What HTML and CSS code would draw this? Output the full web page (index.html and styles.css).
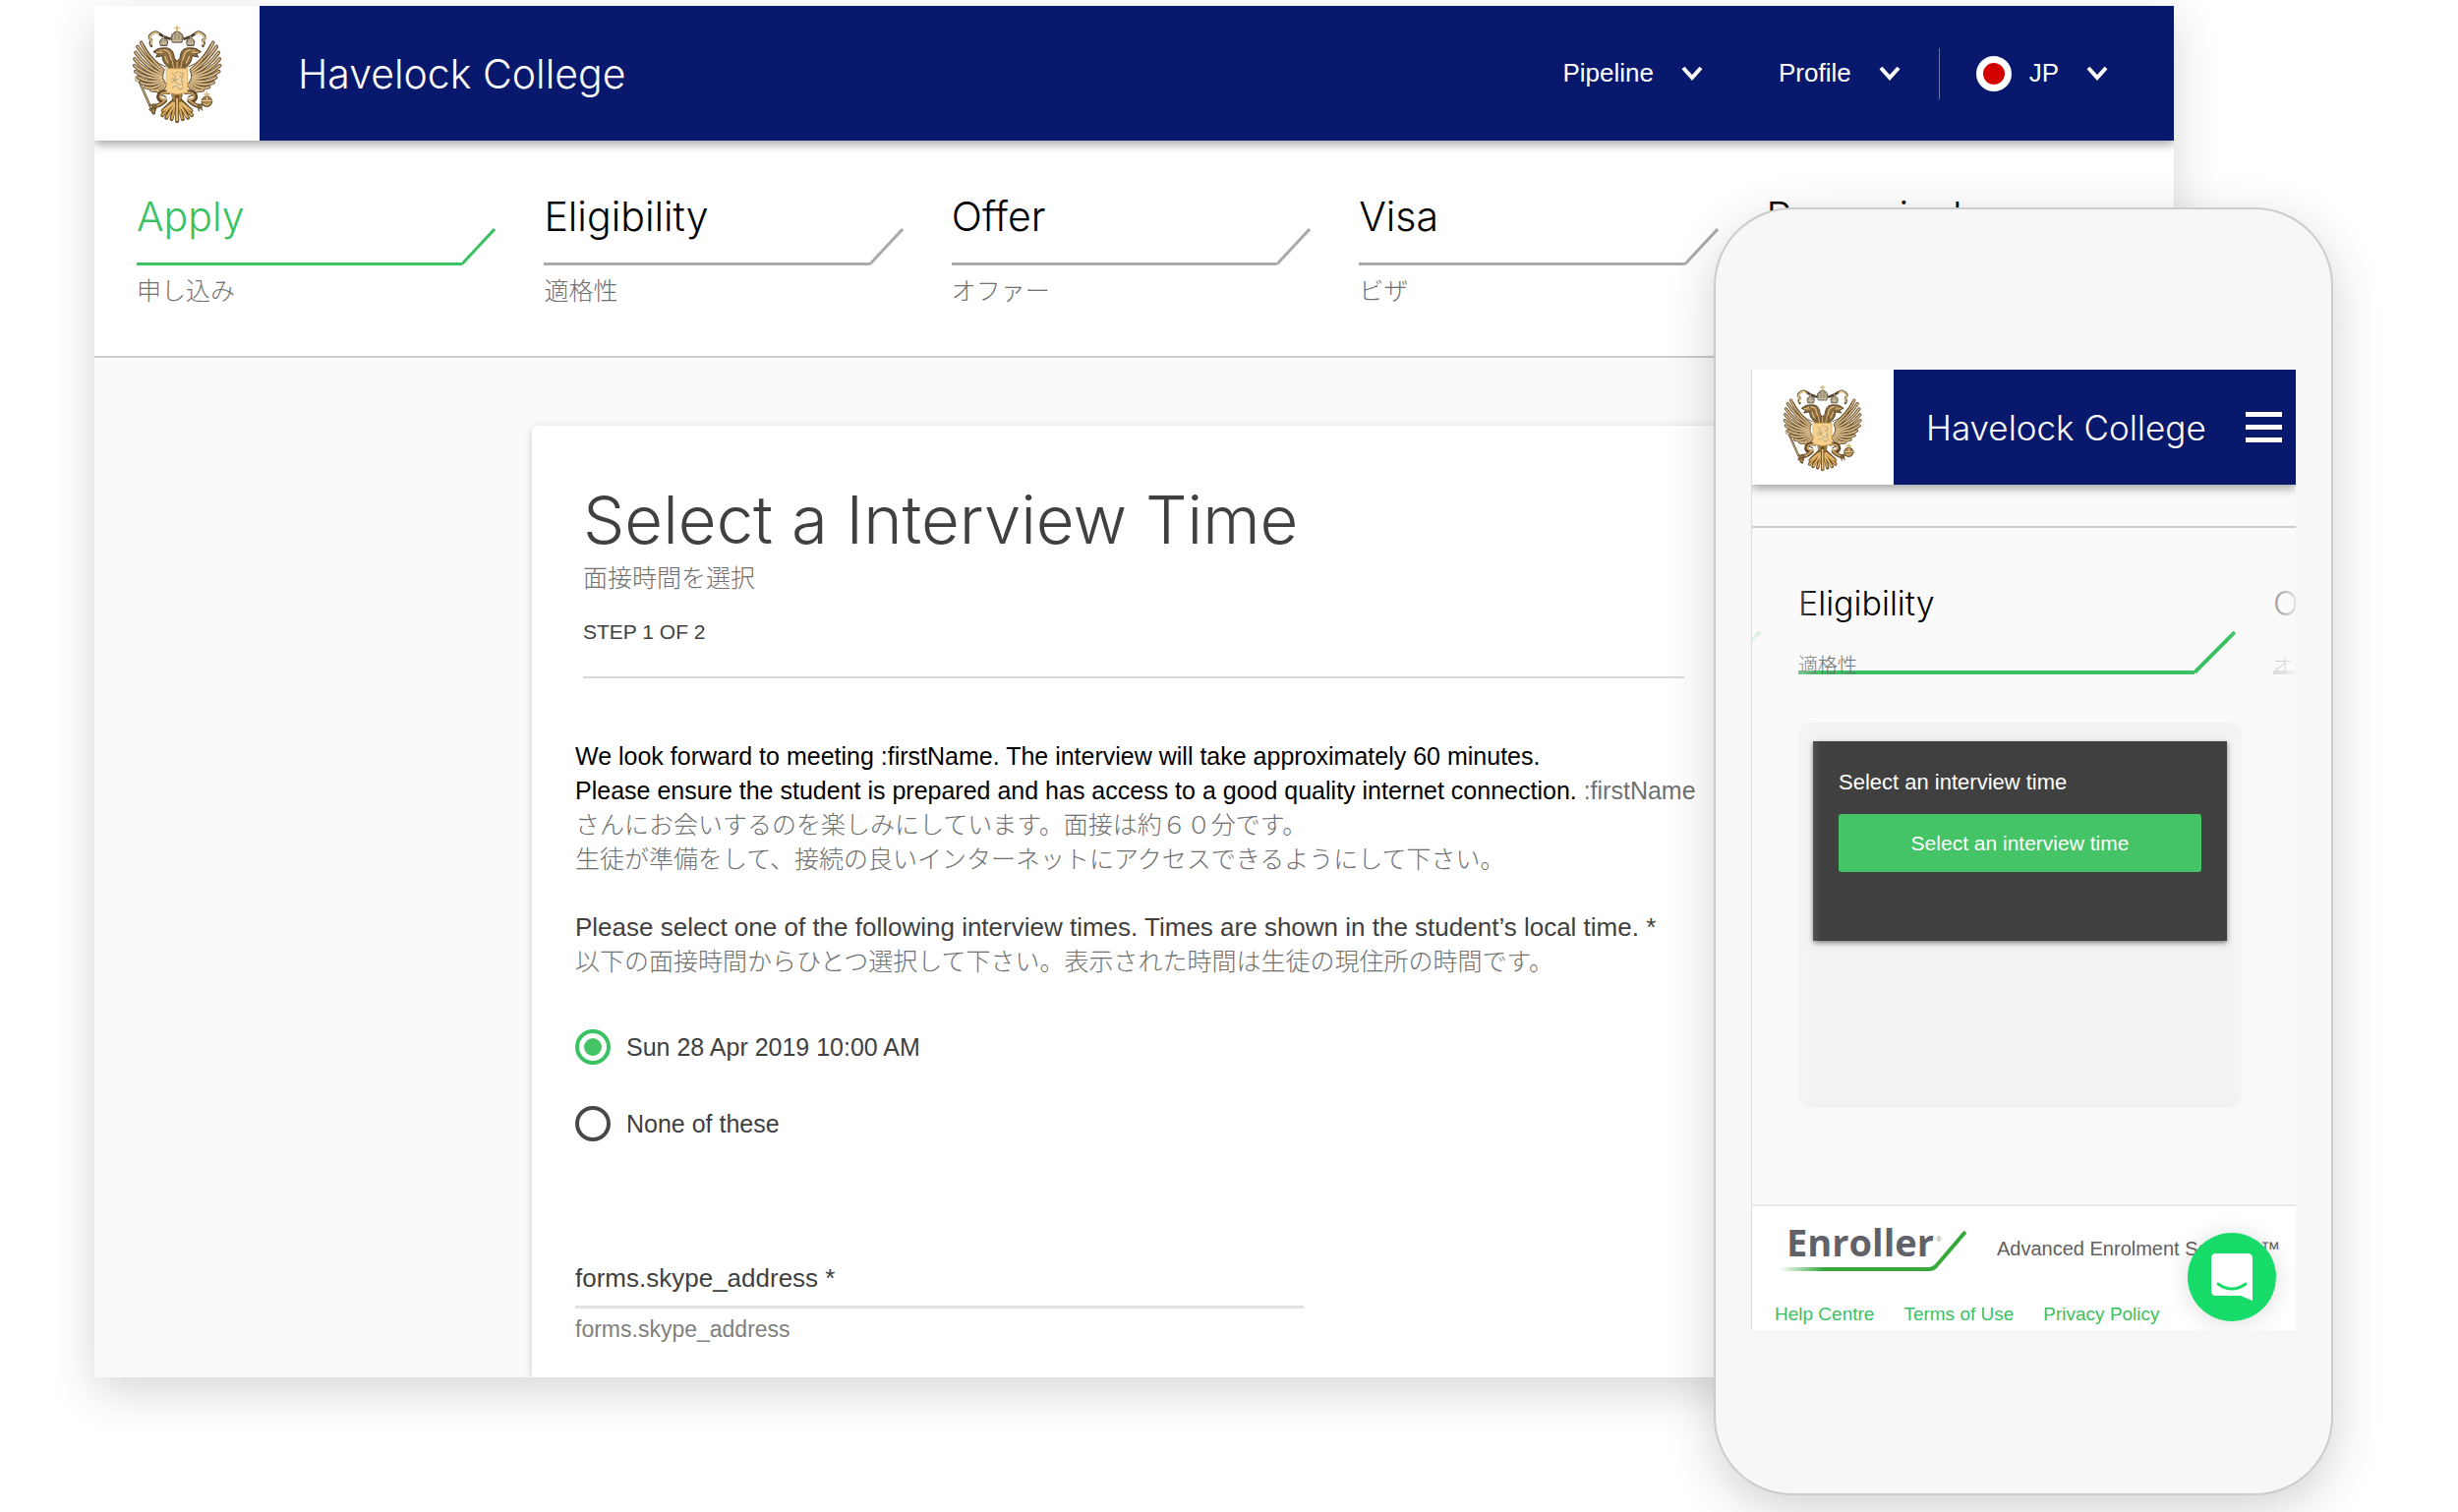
FILE: index.html
```html
<!DOCTYPE html>
<html lang="en">
<head>
    <meta charset="UTF-8">
    <meta name="viewport" content="width=device-width, initial-scale=1.0">
    <title>Havelock College</title>
    <link rel="stylesheet" href="styles.css">
</head>
<body>
    <!-- Shared crest -->
    <svg class="defs" width="0" height="0" aria-hidden="true">
        <defs>
            <linearGradient id="swoosh" x1="0" y1="0" x2="1" y2="0">
                <stop offset="0" stop-color="#36a83c" stop-opacity="0"/>
                <stop offset="0.3" stop-color="#36a83c"/>
            </linearGradient>
            <g id="feathers">
                <path d="M120 168Q76 130 53 84M118 174Q70 140 42 96M116 180Q64 156 36 114M116 186Q62 172 33 134M116 190Q64 184 32 154M116 194Q66 196 35 172M118 198Q74 210 44 190M120 202Q80 220 52 206M122 206Q90 230 66 220M124 210Q104 236 84 229M128 212Q114 238 102 232"/>
            </g>
            <g id="half">
                <use href="#feathers" stroke="#5f4a2e" stroke-width="11"/>
                <use href="#feathers" stroke="#ac8b5c" stroke-width="7"/>
                <use href="#feathers" stroke="#ecd4a4" stroke-width="3"/>
                <path d="M60 90Q84 142 128 158" stroke="#6b5028" stroke-width="3"/>
                <!-- ribbon -->
                <path d="M141 72Q120 66 108 56Q96 46 84 58Q72 66 84 76Q78 86 84 94" stroke="#4f4230" stroke-width="8"/>
                <path d="M106 57Q94 48 84 60Q74 68 84 78L83 90" stroke="#e6c684" stroke-width="5"/>
                <!-- neck and head -->
                <path d="M161 160L134 158Q116 140 118 124L98 128L104 118L90 112Q104 98 122 100Q146 98 152 118Q152 134 162 140Z" fill="#8b6d40" stroke="#4c3a20" stroke-width="3"/>
                <path d="M112 108Q130 102 140 116Q142 134 152 148M126 126Q130 142 144 154M118 114L100 113" stroke="#e2bd7c" stroke-width="4"/>
                <circle cx="118" cy="107" r="2" fill="#2f2412"/>
                <!-- small crown -->
                <path d="M112 92Q104 74 122 70Q140 74 132 92Z" fill="#9d9078" stroke="#5a4c36" stroke-width="3"/>
                <path d="M122 62V90M112 86H132M117 75V88M127 75V88" stroke="#ded2b4" stroke-width="2"/>
                <!-- leg and claw -->
                <path d="M136 236Q108 230 106 252Q112 266 126 262Q112 276 92 280" stroke="#5f4727" stroke-width="13"/>
                <path d="M134 238Q112 234 110 250Q116 262 130 256Q114 274 92 280" stroke="#c9a365" stroke-width="6"/>
                <path d="M116 244L128 250M98 274L86 290M100 278L96 292M94 272L80 276" stroke="#715530" stroke-width="4"/>
                <!-- tail -->
                <path d="M158 256L120 292M158 256L118 306M160 258L130 314M160 258L146 318" stroke="#6a4b20" stroke-width="12"/>
                <path d="M158 260L120 292M158 262L118 306M160 264L131 313M160 266L147 316" stroke="#d9a95c" stroke-width="6"/>
                <path d="M156 264L124 290M158 270L134 310" stroke="#f6dca8" stroke-width="2"/>
            </g>
            <symbol id="crest" viewBox="24 26 280 306">
                <g fill="none" stroke-linecap="round" stroke-linejoin="round">
                    <path d="M44 196L90 300" stroke="#5a4527" stroke-width="7"/>
                    <path d="M44 196L90 300" stroke="#d6ba86" stroke-width="3"/>
                    <circle cx="43" cy="194" r="9" fill="#ddd0b0" stroke="#9a8a66" stroke-width="2"/>
                    <path d="M78 288L96 282L94 302Z" fill="#b08a50" stroke="#5a4527" stroke-width="3"/>
                    <use href="#half"/>
                    <use href="#half" transform="matrix(-1 0 0 1 326 0)"/>
                    <path d="M138 138H188L192 168H134Z" fill="#7d6036"/>
                    <path d="M148 140L152 160M163 142V162M178 140L174 160" stroke="#e2bd7c" stroke-width="3"/>
                    <path d="M146 236H180L174 264H152Z" fill="#a17c44" stroke="#5f4727" stroke-width="2"/>
                    <path d="M163 250V324" stroke="#6a4b20" stroke-width="12"/>
                    <path d="M163 256V322" stroke="#e6bd74" stroke-width="6"/>
                    <!-- main crown -->
                    <path d="M148 82Q136 58 163 48Q190 58 178 82Z" fill="#a39678" stroke="#5a4c36" stroke-width="3"/>
                    <path d="M163 34V48M156 39H170" stroke="#d4b878" stroke-width="5"/>
                    <path d="M148 78H178M152 62Q152 70 154 78M163 52V78M174 62Q174 70 172 78" stroke="#ddd2b8" stroke-width="2"/>
                    <!-- shield -->
                    <path d="M131 163H195V236L163 242L131 236Z" fill="#f8d08a" stroke="#c89a50" stroke-width="2"/>
                    <path d="M148 178L158 188L152 200L164 196M170 174L182 180L178 192L170 186M146 206Q156 196 162 208T182 204M148 222Q160 210 166 222T182 220M158 178L164 172M176 196L180 214M150 192L144 198" stroke="#a39c7c" stroke-width="3"/>
                    <path d="M160 184L170 196L176 212M154 212L168 216" stroke="#e8e3cc" stroke-width="3"/>
                    <!-- orb -->
                    <path d="M254 236V250M247 242H261" stroke="#d9bb7c" stroke-width="5"/>
                    <circle cx="254" cy="264" r="16" fill="#a5814a" stroke="#5a4527" stroke-width="3"/>
                    <path d="M239 262H269M254 249V262M246 272Q254 278 262 270" stroke="#e8cf9c" stroke-width="3"/>
                </g>
            </symbol>
            <symbol id="chevron" viewBox="0 0 22 16">
                <path d="M2 2L11 12L20 2" fill="none" stroke="#fff" stroke-width="4"/>
            </symbol>
        </defs>
    </svg>

    <div class="stage">
        <div class="window">
            <header class="topbar">
                <a class="logo" href="#" aria-label="Home"><svg class="crest"><use href="#crest"/></svg></a>
                <span class="school">Havelock College</span>
                <nav class="menu">
                    <button type="button">Pipeline <svg class="chevron"><use href="#chevron"/></svg></button>
                    <button type="button">Profile <svg class="chevron"><use href="#chevron"/></svg></button>
                    <button type="button" class="language"><span class="flag"></span>JP <svg class="chevron"><use href="#chevron"/></svg></button>
                </nav>
            </header>

            <ol class="steps">
                <li class="step active">
                    <div class="step-head"><h2>Apply</h2><svg viewBox="0 0 34 38"><path d="M0 36.5L33 1"/></svg></div>
                    <p lang="ja">申し込み</p>
                </li>
                <li class="step">
                    <div class="step-head"><h2>Eligibility</h2><svg viewBox="0 0 34 38"><path d="M0 36.5L33 1"/></svg></div>
                    <p lang="ja">適格性</p>
                </li>
                <li class="step">
                    <div class="step-head"><h2>Offer</h2><svg viewBox="0 0 34 38"><path d="M0 36.5L33 1"/></svg></div>
                    <p lang="ja">オファー</p>
                </li>
                <li class="step">
                    <div class="step-head"><h2>Visa</h2><svg viewBox="0 0 34 38"><path d="M0 36.5L33 1"/></svg></div>
                    <p lang="ja">ビザ</p>
                </li>
                <li class="step">
                    <div class="step-head"><h2>Pre-arrival</h2></div>
                </li>
            </ol>

            <main class="card">
                <div class="card-head">
                    <h1>Select a Interview Time</h1>
                    <p lang="ja">面接時間を選択</p>
                    <p class="count">STEP 1 OF 2</p>
                </div>
                <form>
                    <p class="intro">We look forward to meeting :firstName. The interview will take approximately 60 minutes.<br>
                    Please ensure the student is prepared and has access to a good quality internet connection. <span lang="ja">:firstName<br>
                    さんにお会いするのを楽しみにしています。面接は約６０分です。<br>
                    生徒が準備をして、接続の良いインターネットにアクセスできるようにして下さい。</span></p>
                    <p class="question">Please select one of the following interview times. Times are shown in the student’s local time. *<br>
                    <span lang="ja">以下の面接時間からひとつ選択して下さい。表示された時間は生徒の現住所の時間です。</span></p>
                    <div class="options">
                        <label><input type="radio" name="time" checked> Sun 28 Apr 2019 10:00 AM</label>
                        <label><input type="radio" name="time"> None of these</label>
                    </div>
                    <div class="field">
                        <input type="text" id="skype" placeholder="forms.skype_address *">
                        <label for="skype">forms.skype_address</label>
                    </div>
                </form>
            </main>
        </div>

        <div class="phone">
            <div class="screen">
                <header class="topbar">
                    <a class="logo" href="#" aria-label="Home"><svg class="crest"><use href="#crest"/></svg></a>
                    <span class="school">Havelock College</span>
                    <button type="button" class="burger" aria-label="Menu"><span></span><span></span><span></span></button>
                </header>
                <div class="carousel">
                    <section class="slide">
                        <div class="step-head"><div class="step-title"></div><svg viewBox="0 0 42 44"><path d="M0 42L41 1"/></svg></div>
                    </section>
                    <section class="slide">
                        <div class="step-head"><div class="step-title"><h2>Eligibility</h2><p lang="ja">適格性</p></div><svg viewBox="0 0 42 44"><path d="M0 42L41 1"/></svg></div>
                        <div class="panel">
                            <div class="task">
                                <h3>Select an interview time</h3>
                                <button type="button">Select an interview time</button>
                            </div>
                        </div>
                    </section>
                    <section class="slide next">
                        <div class="step-head"><div class="step-title"><h2>Offer</h2><p lang="ja">オファー</p></div></div>
                    </section>
                </div>
                <footer class="footer">
                    <div class="brand">
                        <svg viewBox="0 0 192 50">
                            <text class="brand-name" x="7" y="33">Enroller</text>
                            <text class="brand-mark" x="159" y="18">®</text>
                            <path d="M0 44H150V48H0Z" fill="url(#swoosh)"/>
                            <path d="M148 46H152Q156 46 159 43L189 8" fill="none" stroke="#36a83c" stroke-width="4"/>
                        </svg>
                        <span>Advanced Enrolment Services™</span>
                    </div>
                    <div class="links">
                        <a href="#">Help Centre</a>
                        <a href="#">Terms of Use</a>
                        <a href="#">Privacy Policy</a>
                    </div>
                </footer>
                <button type="button" class="chat" aria-label="Open chat">
                    <svg viewBox="0 0 42 48"><path d="M5 0H37Q42 0 42 5V48L30 43H5Q0 43 0 38V5Q0 0 5 0Z" fill="#fff"/><path d="M7 31Q21 41 35 31" fill="none" stroke="#18dc6a" stroke-width="3" stroke-linecap="round"/></svg>
                </button>
            </div>
        </div>
    </div>
</body>
</html>
```
FILE: styles.css
```css
* {
    box-sizing: border-box;
}

body {
    margin: 0;
    background: #fff;
    color: #404040;
    font-family: "Liberation Sans", "Noto Sans CJK JP", Arial, sans-serif;
    font-size: 25px;
    line-height: 35px;
}

h1, h2, h3, p, ol {
    margin: 0;
    padding: 0;
    font-weight: 300;
}

h1, h2, .school {
    font-family: Inter, "Liberation Sans", sans-serif;
    font-weight: 300;
}

button {
    border: none;
    background: none;
    padding: 0;
    color: inherit;
    font: inherit;
    cursor: pointer;
}

[lang="ja"] {
    color: #707070;
    font-size: 25px;
    font-weight: 300;
}

.defs {
    position: absolute;
}

.stage {
    position: relative;
    min-height: 1538px;
    padding: 6px 289px 0 96px;
    overflow: hidden;
}

/* Desktop window */
.window {
    overflow: hidden;
    background: #fafafa;
    box-shadow: 0 14px 44px rgba(0, 0, 0, 0.16);
}

.topbar {
    position: relative;
    display: flex;
    align-items: center;
    height: 137px;
    background: #08196d;
    color: #fff;
    box-shadow: 0 3px 10px rgba(0, 0, 0, 0.4);
}

.logo {
    display: flex;
    align-items: center;
    justify-content: center;
    width: 168px;
    height: 100%;
    background: #fff;
}

.crest {
    width: 93px;
    height: 102px;
}

.school {
    margin-left: 39px;
    font-size: 41px;
    line-height: 48px;
}

.menu {
    display: flex;
    align-items: center;
    margin-left: auto;
    padding-right: 67px;
}

.menu button {
    display: flex;
    align-items: center;
    gap: 28px;
    margin-right: 77px;
    font-size: 26px;
}

.menu .chevron {
    width: 22px;
    height: 16px;
}

.menu button:nth-child(2) {
    margin-right: 39px;
}

.menu .language {
    height: 52px;
    margin-right: 0;
    padding-left: 37px;
    border-left: 1px solid #6b76a8;
}

.flag {
    width: 36px;
    height: 36px;
    margin-right: -10px;
    border: 7px solid #fff;
    border-radius: 50%;
    background: #d30000;
}

.steps {
    display: grid;
    grid-template-columns: repeat(5, 1fr);
    padding: 53px 0 50px 43px;
    border-bottom: 2px solid #ccc;
    background: #fff;
    list-style: none;
}

.step-head {
    display: flex;
    align-items: flex-end;
    color: #000;
}

.step-head svg {
    fill: none;
    stroke: #aaa;
    stroke-width: 3;
}

.step .step-head {
    margin-right: 49px;
}

.step h2 {
    flex: 1;
    padding-bottom: 23px;
    border-bottom: 3px solid #aaa;
    font-size: 41px;
    line-height: 48px;
}

.step:last-child h2 {
    border-color: transparent;
}

.step .step-head svg {
    width: 34px;
    height: 38px;
}

.step p {
    margin-top: 10px;
    line-height: 32px;
}

.active .step-head h2 {
    border-color: #3ac162;
    color: #3ac162;
}

.active .step-head svg {
    stroke: #3ac162;
}

/* Interview form */
.card {
    margin: 69px 445px 0;
    padding: 56px 53px 33px 44px;
    border-radius: 6px 6px 0 0;
    background: #fff;
    box-shadow: 0 2px 10px rgba(0, 0, 0, 0.18);
}

.card-head {
    margin-left: 8px;
    padding-bottom: 29px;
    border-bottom: 2px solid #d8d8d8;
}

.card-head h1 {
    font-size: 67px;
    line-height: 80px;
}

.card-head p {
    margin-top: 3px;
    line-height: 32px;
}

.card-head .count {
    margin-top: 23px;
    font-size: 21px;
}

.intro {
    margin-top: 62px;
    color: #000;
    white-space: nowrap;
}

.question {
    margin-top: 34px;
    font-size: 26px;
    white-space: nowrap;
}

.options {
    display: grid;
    gap: 42px;
    margin-top: 51px;
}

.options label {
    display: flex;
    align-items: center;
    gap: 16px;
    height: 36px;
}

.options input {
    appearance: none;
    width: 36px;
    height: 36px;
    margin: 0;
    border: 4px solid #484848;
    border-radius: 50%;
}

.options input:checked {
    padding: 5px;
    border-color: #3ac162;
    background: #44c466 content-box;
}

.field {
    display: grid;
    max-width: 741px;
    margin-top: 122px;
}

.field input {
    height: 48px;
    padding: 0 0 10px;
    border: none;
    border-bottom: 3px solid #e2e2e2;
    font: inherit;
    font-size: 26px;
}

.field input::placeholder {
    color: #404040;
}

.field label {
    margin-top: 5px;
    color: #808080;
    font-size: 23px;
    line-height: 32px;
}

/* Phone */
.phone {
    position: absolute;
    top: 211px;
    right: 127px;
    width: 630px;
    padding: 163px 36px 166px;
    border: 2px solid #ccc;
    border-radius: 80px;
    background: #f7f7f7;
    box-shadow: 0 14px 50px rgba(0, 0, 0, 0.18);
}

.screen {
    position: relative;
    overflow: hidden;
    border-left: 1px solid #ddd;
    background: #fafafa;
}

.phone .topbar {
    height: 117px;
}

.phone .logo {
    width: 144px;
}

.phone .crest {
    width: 82px;
    height: 90px;
}

.phone .school {
    margin-left: 33px;
    font-size: 35px;
    white-space: nowrap;
}

.burger {
    display: grid;
    gap: 8px;
    width: 37px;
    margin-left: auto;
    margin-right: 14px;
}

.burger span {
    height: 5px;
    background: #fff;
}

.carousel {
    position: relative;
    display: flex;
    justify-content: center;
    margin-top: 42px;
    padding: 57px 0 98px;
    border-top: 2px solid #ccc;
}

/* Fade the neighbouring slides out at both edges */
.carousel::before,
.carousel::after {
    content: "";
    position: absolute;
    top: 0;
    bottom: 0;
    left: 0;
    width: 70px;
    background: linear-gradient(to right, rgba(250, 250, 250, 0.9), rgba(250, 250, 250, 0));
}

.carousel::after {
    left: auto;
    right: 0;
    background: linear-gradient(to left, rgba(250, 250, 250, 0.9), rgba(250, 250, 250, 0));
}

.slide {
    flex: 0 0 483px;
    padding: 0 20px 0 12px;
}

.slide .step-head {
    height: 92px;
    margin-right: 6px;
}

.step-title {
    flex: 1;
    border-bottom: 4px solid #3ac162;
}

.slide .step-head svg {
    width: 42px;
    height: 44px;
    stroke: #3ac162;
    stroke-width: 4;
}

.next .step-title {
    border-color: #aaa;
}

.slide h2 {
    font-size: 34px;
    line-height: 40px;
}

.slide p {
    margin: 31px 0 -7px;
    font-size: 20px;
    line-height: 24px;
}

.panel {
    height: 392px;
    margin-top: 49px;
    padding: 19px 15px;
    border-radius: 12px;
    background: #f2f2f2;
}

.task {
    padding: 28px 26px 70px;
    background: #404040;
    color: #fff;
    box-shadow: 0 2px 5px rgba(0, 0, 0, 0.5);
}

.task h3 {
    font-size: 22px;
    line-height: 28px;
}

.task button {
    width: 100%;
    height: 59px;
    margin-top: 18px;
    border-radius: 3px;
    background: #44c466;
    font-size: 21px;
}

.footer {
    height: 128px;
    padding-top: 18px;
    border-top: 2px solid #e8e8e8;
    background: #fff;
}

.brand {
    display: flex;
    align-items: center;
    gap: 29px;
    margin-left: 28px;
    color: #606060;
    font-size: 20px;
    white-space: nowrap;
}

.brand svg {
    flex: none;
    width: 192px;
    height: 50px;
}

.brand-name {
    fill: #616269;
    font: bold 38px "Open Sans", sans-serif;
}

.brand-mark {
    fill: #999;
    font-size: 8px;
}

.links {
    display: flex;
    gap: 30px;
    margin: 30px 0 0 23px;
    font-size: 19px;
    line-height: 24px;
}

.links a {
    color: #3ac162;
    text-decoration: none;
}

.chat {
    position: absolute;
    right: 20px;
    bottom: 9px;
    display: grid;
    place-items: center;
    width: 90px;
    height: 90px;
    border-radius: 50%;
    background: #18dc6a;
    box-shadow: 0 2px 24px rgba(0, 0, 0, 0.14);
}

.chat svg {
    width: 42px;
    height: 48px;
}
```
